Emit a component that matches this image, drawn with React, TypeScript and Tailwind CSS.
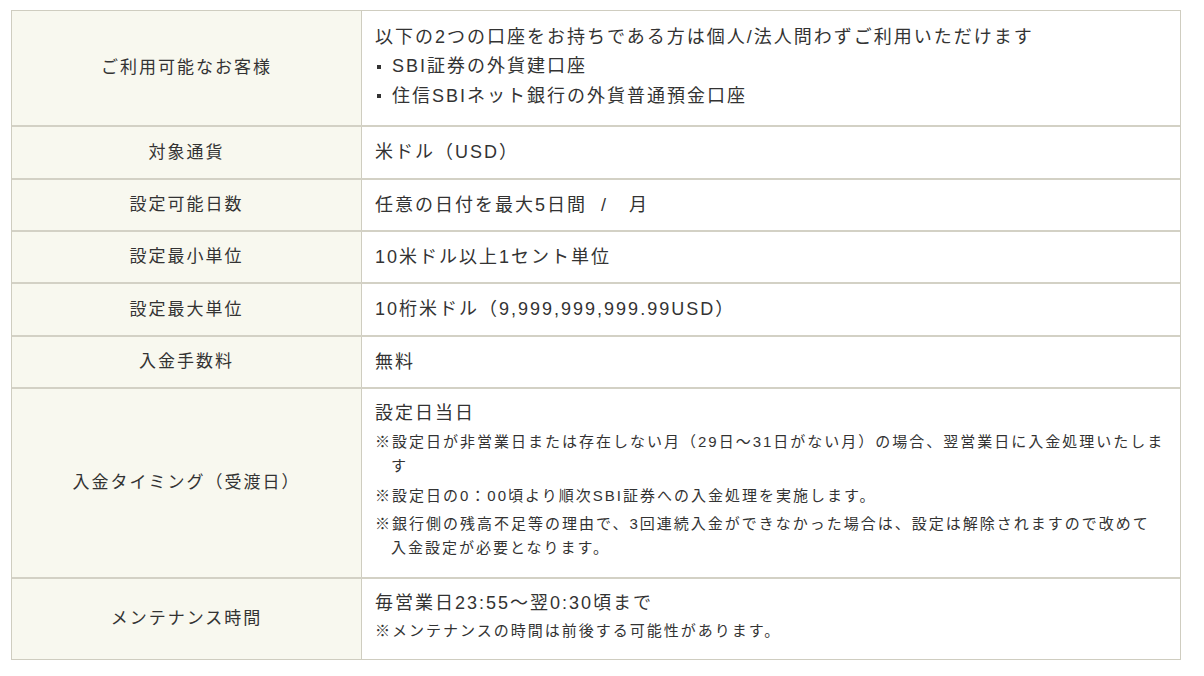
import React from 'react'

const font = {
  fontFamily: '"Liberation Sans", "Noto Sans CJK JP", sans-serif',
}

type Row = {
  label: string
  body: React.ReactNode
  cls?: string
}

function Note({ children, cls = 'mt-[5px]' }: { children: React.ReactNode; cls?: string }) {
  return (
    <p className={`${cls} pl-[16px] -indent-[16px] text-[15px] leading-[24px] tracking-[2px]`}>
      {children}
    </p>
  )
}

function Bullet({ children }: { children: React.ReactNode }) {
  return (
    <li className="flex items-center mt-[1px]">
      <span className="w-[4px] h-[4px] bg-[#333] ml-[2px] mr-[11px] shrink-0" />
      <span>{children}</span>
    </li>
  )
}

const rows: Row[] = [
  {
    label: 'ご利用可能なお客様',
    cls: 'pt-[12px] pb-[15px]',
    body: (
      <>
        <p>以下の2つの口座をお持ちである方は個人/法人問わずご利用いただけます</p>
        <ul>
          <Bullet>SBI証券の外貨建口座</Bullet>
          <Bullet>住信SBIネット銀行の外貨普通預金口座</Bullet>
        </ul>
      </>
    ),
  },
  { label: '対象通貨', body: <p>米ドル（USD）</p> },
  { label: '設定可能日数', body: <p>任意の日付を最大5日間&nbsp;&nbsp;/&nbsp;&nbsp;&nbsp;月</p> },
  { label: '設定最小単位', body: <p>10米ドル以上1セント単位</p> },
  { label: '設定最大単位', body: <p>10桁米ドル（9,999,999,999.99USD）</p> },
  { label: '入金手数料', body: <p>無料</p> },
  {
    label: '入金タイミング（受渡日）',
    cls: 'pt-[10px] pb-[17px]',
    body: (
      <>
        <p>設定日当日</p>
        <Note cls="mt-[2px]">
          ※設定日が非営業日または存在しない月（29日～31日がない月）の場合、翌営業日に入金処理いたします
        </Note>
        <Note cls="mt-[6px]">※設定日の0：00頃より順次SBI証券への入金処理を実施します。</Note>
        <Note cls="mt-[4px]">
          ※銀行側の残高不足等の理由で、3回連続入金ができなかった場合は、設定は解除されますので改めて
          <br />
          入金設定が必要となります。
        </Note>
      </>
    ),
  },
  {
    label: 'メンテナンス時間',
    cls: 'pt-[10px] pb-[16px]',
    body: (
      <>
        <p>毎営業日23:55～翌0:30頃まで</p>
        <Note cls="mt-[2px]">※メンテナンスの時間は前後する可能性があります。</Note>
      </>
    ),
  },
]

export default function App() {
  return (
    <div className="w-[1204px] h-[676px] bg-white pt-[10px] pl-[11px] text-[#333]" style={font}>
      <div className="w-[1170px] border border-[#cfcdc0]">
        {rows.map((r, i) => (
          <div
            key={r.label}
            className={`grid grid-cols-[350px_1fr] ${i < rows.length - 1 ? 'border-b-2 border-[#d3d1c5]' : ''}`}
          >
            <div className="flex items-center justify-center bg-[#f8f8ef] border-r border-[#cfcdc0] text-[17px] tracking-[2px]">
              {r.label}
            </div>
            <div
              className={`pl-[13px] pr-[14px] text-[18px] leading-[28.4px] tracking-[2px] ${r.cls ?? 'py-[11px]'}`}
            >
              {r.body}
            </div>
          </div>
        ))}
      </div>
    </div>
  )
}
